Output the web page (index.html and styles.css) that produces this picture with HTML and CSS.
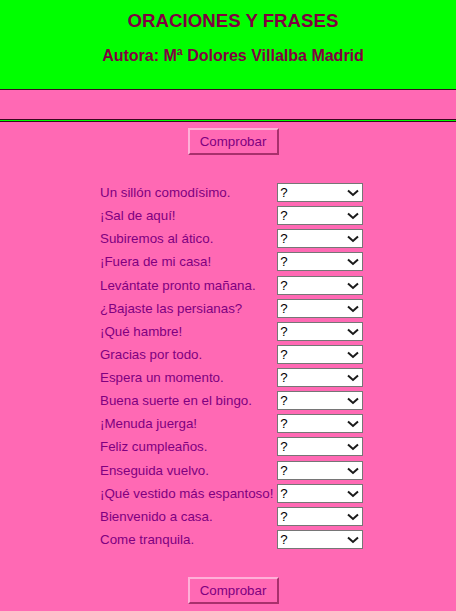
FILE: index.html
```html
<!DOCTYPE html>
<html lang="es">
<head>
<meta charset="utf-8">
<title>Oraciones y frases</title>
<link rel="stylesheet" href="styles.css">
</head>
<body>
<header class="header">
  <h1 class="title">ORACIONES Y FRASES</h1>
  <h2 class="author">Autora: Mª Dolores Villalba Madrid</h2>
</header>
<div class="band"></div>
<div class="rule"></div>
<main class="content">
  <div class="actions"><button class="btn" type="button">Comprobar</button></div>
  <form class="quiz">
    <label class="q">Un sillón comodísimo.</label><span class="pick"><select class="sel"><option>?</option></select><svg class="chev" viewBox="0 0 12 8"><path d="M1 1.5 L6 6 L11 1.5"/></svg></span>
    <label class="q">¡Sal de aquí!</label><span class="pick"><select class="sel"><option>?</option></select><svg class="chev" viewBox="0 0 12 8"><path d="M1 1.5 L6 6 L11 1.5"/></svg></span>
    <label class="q">Subiremos al ático.</label><span class="pick"><select class="sel"><option>?</option></select><svg class="chev" viewBox="0 0 12 8"><path d="M1 1.5 L6 6 L11 1.5"/></svg></span>
    <label class="q">¡Fuera de mi casa!</label><span class="pick"><select class="sel"><option>?</option></select><svg class="chev" viewBox="0 0 12 8"><path d="M1 1.5 L6 6 L11 1.5"/></svg></span>
    <label class="q">Levántate pronto mañana.</label><span class="pick"><select class="sel"><option>?</option></select><svg class="chev" viewBox="0 0 12 8"><path d="M1 1.5 L6 6 L11 1.5"/></svg></span>
    <label class="q">¿Bajaste las persianas?</label><span class="pick"><select class="sel"><option>?</option></select><svg class="chev" viewBox="0 0 12 8"><path d="M1 1.5 L6 6 L11 1.5"/></svg></span>
    <label class="q">¡Qué hambre!</label><span class="pick"><select class="sel"><option>?</option></select><svg class="chev" viewBox="0 0 12 8"><path d="M1 1.5 L6 6 L11 1.5"/></svg></span>
    <label class="q">Gracias por todo.</label><span class="pick"><select class="sel"><option>?</option></select><svg class="chev" viewBox="0 0 12 8"><path d="M1 1.5 L6 6 L11 1.5"/></svg></span>
    <label class="q">Espera un momento.</label><span class="pick"><select class="sel"><option>?</option></select><svg class="chev" viewBox="0 0 12 8"><path d="M1 1.5 L6 6 L11 1.5"/></svg></span>
    <label class="q">Buena suerte en el bingo.</label><span class="pick"><select class="sel"><option>?</option></select><svg class="chev" viewBox="0 0 12 8"><path d="M1 1.5 L6 6 L11 1.5"/></svg></span>
    <label class="q">¡Menuda juerga!</label><span class="pick"><select class="sel"><option>?</option></select><svg class="chev" viewBox="0 0 12 8"><path d="M1 1.5 L6 6 L11 1.5"/></svg></span>
    <label class="q">Feliz cumpleaños.</label><span class="pick"><select class="sel"><option>?</option></select><svg class="chev" viewBox="0 0 12 8"><path d="M1 1.5 L6 6 L11 1.5"/></svg></span>
    <label class="q">Enseguida vuelvo.</label><span class="pick"><select class="sel"><option>?</option></select><svg class="chev" viewBox="0 0 12 8"><path d="M1 1.5 L6 6 L11 1.5"/></svg></span>
    <label class="q">¡Qué vestido más espantoso!</label><span class="pick"><select class="sel"><option>?</option></select><svg class="chev" viewBox="0 0 12 8"><path d="M1 1.5 L6 6 L11 1.5"/></svg></span>
    <label class="q">Bienvenido a casa.</label><span class="pick"><select class="sel"><option>?</option></select><svg class="chev" viewBox="0 0 12 8"><path d="M1 1.5 L6 6 L11 1.5"/></svg></span>
    <label class="q">Come tranquila.</label><span class="pick"><select class="sel"><option>?</option></select><svg class="chev" viewBox="0 0 12 8"><path d="M1 1.5 L6 6 L11 1.5"/></svg></span>
  </form>
  <div class="actions bottom"><button class="btn" type="button">Comprobar</button></div>
</main>
</body>
</html>
```
FILE: styles.css
```css
html, body {
  margin: 0;
  padding: 0;
  background: #ff69b4;
  font-family: "Liberation Sans", Arial, sans-serif;
}

.header {
  background: #00ff00;
  height: 89px;
  border-bottom: 1px solid #3a0820;
  text-align: center;
  padding-left: 10px;
  overflow: hidden;
}

.title {
  margin: 10px 0 0;
  font-size: 18.67px;
  line-height: 21px;
  font-weight: bold;
  color: #800040;
}

.author {
  margin: 16px 0 0;
  font-size: 16px;
  line-height: 18px;
  font-weight: bold;
  color: #800040;
}

.band {
  height: 29px;
}

.rule {
  height: 1px;
  background: #00ff00;
  border-top: 1px solid #3a0820;
  border-bottom: 1px solid #3a0820;
}

.content {
  padding-top: 6px;
}

.actions {
  display: flex;
  justify-content: center;
  padding-left: 10px;
}

.btn {
  width: 91px;
  height: 27px;
  padding: 0;
  background: #ff69b4;
  color: #800080;
  font-family: "Liberation Sans", Arial, sans-serif;
  font-size: 13.33px;
  border: 2px solid;
  border-color: #ffb0d8 #a8306c #a8306c #ffb0d8;
}

.quiz {
  display: grid;
  grid-template-columns: auto 86px;
  grid-auto-rows: 23.13px;
  column-gap: 4px;
  align-items: center;
  justify-content: start;
  margin: 26px 0 0;
  padding-left: 100px;
}

.q {
  font-size: 13.33px;
  color: #800080;
  white-space: nowrap;
}

.pick {
  position: relative;
  display: block;
  width: 86px;
  height: 19px;
}

.sel {
  display: block;
  width: 86px;
  height: 19px;
  box-sizing: border-box;
  margin: 0;
  padding: 0 0 0 2px;
  appearance: none;
  -webkit-appearance: none;
  font-family: "Liberation Sans", Arial, sans-serif;
  font-size: 13.33px;
  line-height: 17px;
  background: #fff;
  border: 1px solid #767676;
  border-radius: 0;
  color: #000;
}

.chev {
  position: absolute;
  right: 4px;
  top: 6px;
  width: 12px;
  height: 8px;
  pointer-events: none;
}

.chev path {
  fill: none;
  stroke: #1a1a1a;
  stroke-width: 2;
}

.bottom {
  margin-top: 26px;
}
```
